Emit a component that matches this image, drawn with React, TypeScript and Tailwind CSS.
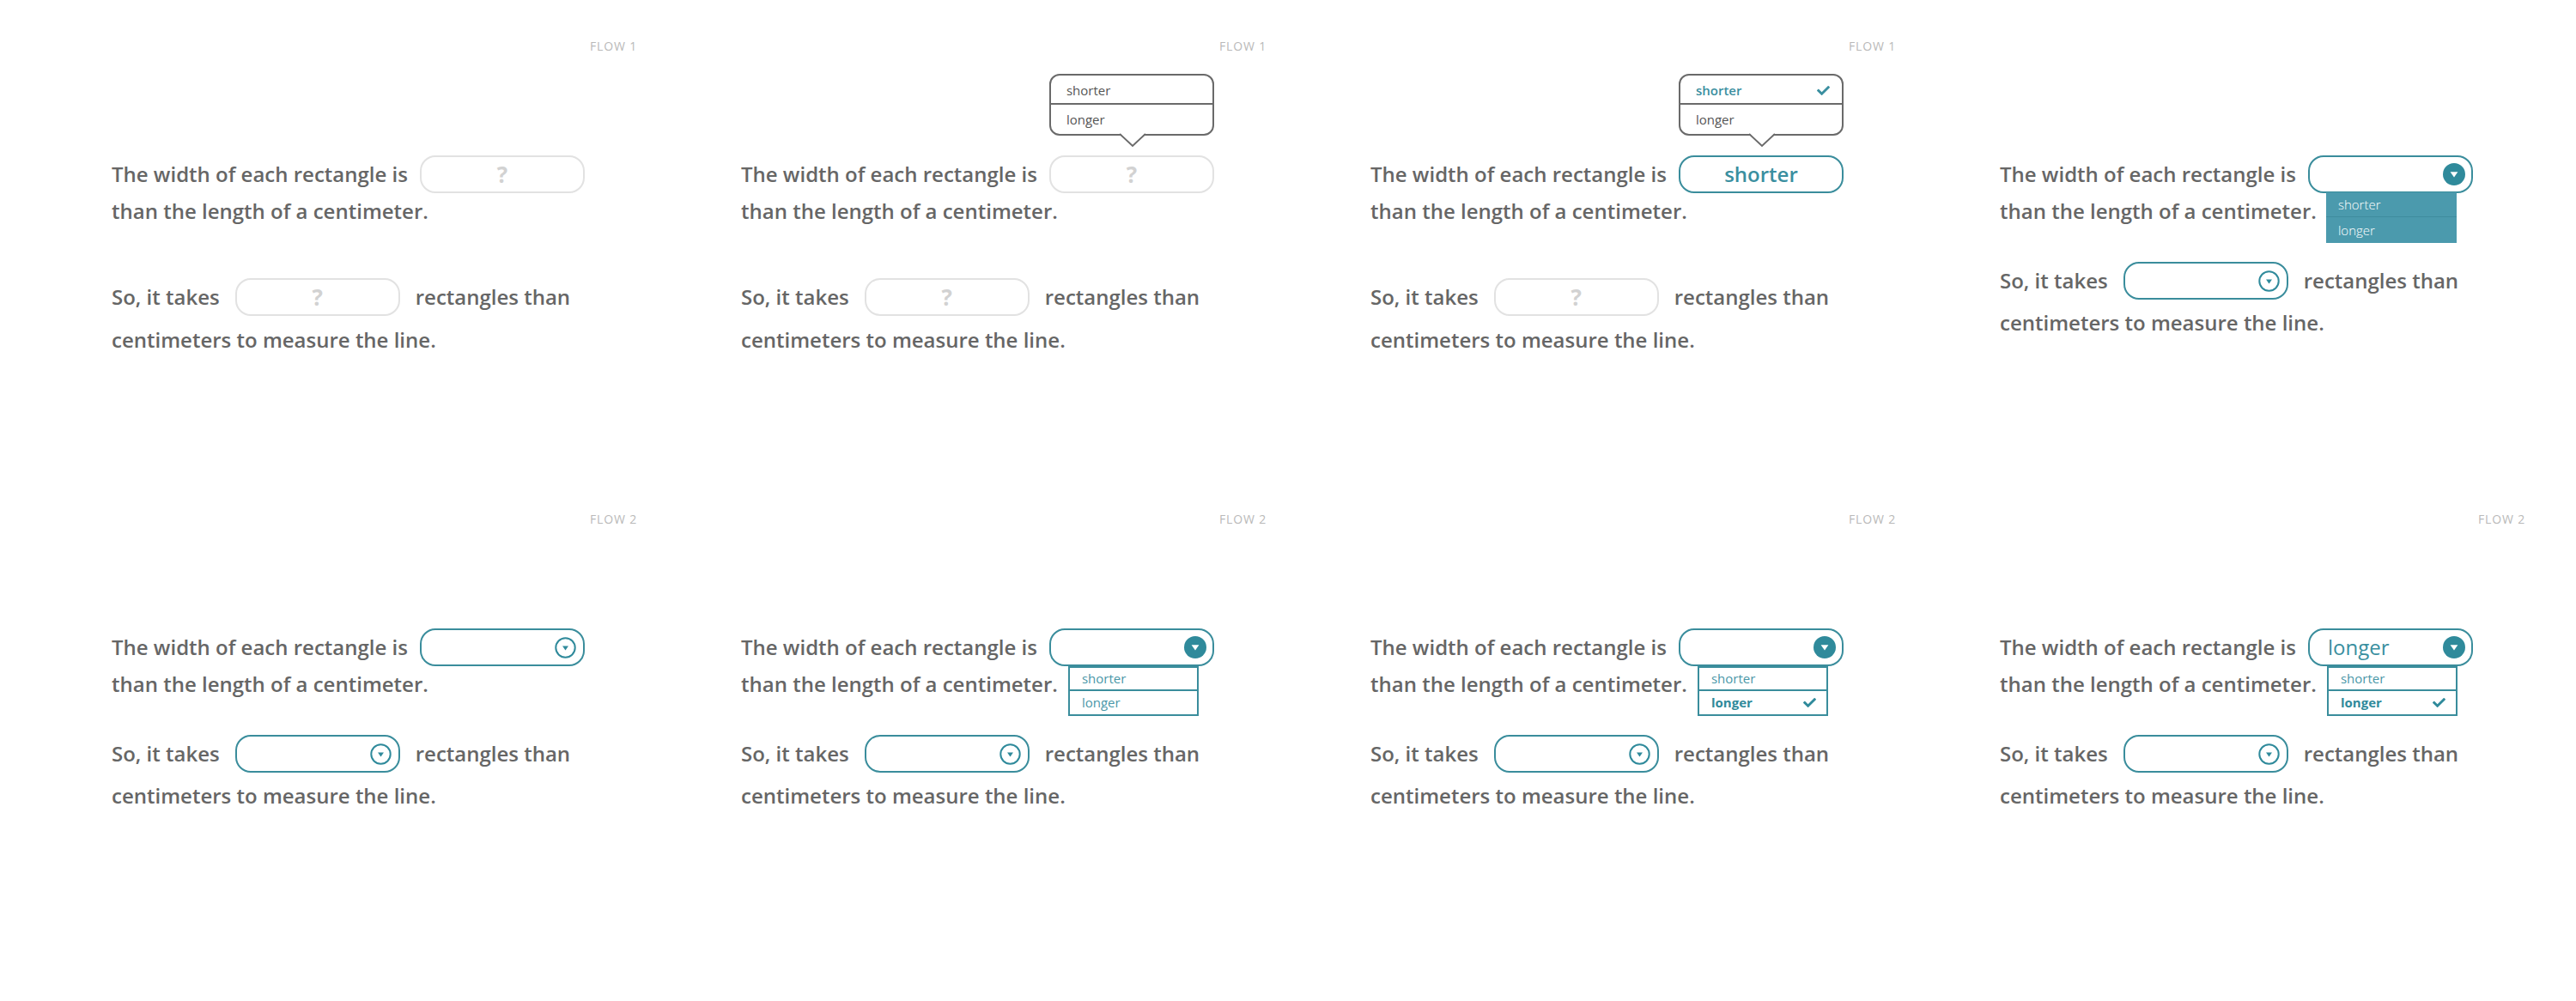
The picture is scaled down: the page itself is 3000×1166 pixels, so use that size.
import React from "react";
import { FaCheck } from "react-icons/fa";

type BoxKind =
  | "blank"
  | "outline"
  | "filled"
  | "shorter"
  | "longerFilled";

function CircleFilled() {
  return (
    <svg width="26" height="26" viewBox="0 0 26 26">
      <circle cx="13" cy="13" r="13" fill="#2f8a9b" />
      <path d="M8.6 10.2 L17.4 10.2 L13 16.6 Z" fill="#ffffff" />
    </svg>
  );
}

function CircleOutline() {
  return (
    <svg width="25" height="25" viewBox="0 0 25 25">
      <circle cx="12.5" cy="12.5" r="11.2" fill="none" stroke="#2f8a9b" strokeWidth="2" />
      <path d="M9 10.4 L16 10.4 L12.5 15.6 Z" fill="#2f8a9b" />
    </svg>
  );
}

function Tooltip({ selected }: { selected: boolean }) {
  return (
    <div className="absolute left-[-2px] top-[-97px] w-[192px] h-[72px] rounded-[12px] border-2 border-[#6a6a6a] bg-white flex flex-col">
      <div className="h-[34px] flex items-center justify-between pl-[18px] pr-[14px] pt-[3px] border-b-2 border-[#6a6a6a]">
        <span
          className={
            selected
              ? "text-[15px] font-semibold text-[#3a8fa0]"
              : "text-[15px] font-medium text-[#555555]"
          }
        >
          shorter
        </span>
        {selected ? <FaCheck className="text-[#3a8fa0] text-[15px]" /> : null}
      </div>
      <div className="flex-1 flex items-center pl-[18px]">
        <span className="text-[15px] font-medium text-[#555555]">longer</span>
      </div>
      <svg
        className="absolute left-[80px] bottom-[-16px]"
        width="30"
        height="17"
        viewBox="0 0 30 17"
      >
        <polygon points="0,0 15,15 30,0" fill="#ffffff" />
        <polyline points="0,1 15,15 30,1" fill="none" stroke="#6a6a6a" strokeWidth="2" />
      </svg>
    </div>
  );
}

function WhiteList({ selected }: { selected: boolean }) {
  return (
    <div className="absolute left-[20px] top-[42px] w-[152px] border-2 border-[#3a8d9c] bg-white flex flex-col">
      <div className="h-[27px] flex items-center pl-[14px] border-b-2 border-[#3a8d9c]">
        <span className="text-[15px] text-[#4a97a8]">shorter</span>
      </div>
      <div className="h-[27px] flex items-center justify-between pl-[14px] pr-[12px]">
        <span
          className={
            selected
              ? "text-[15px] font-bold text-[#2f8a9b]"
              : "text-[15px] text-[#4a97a8]"
          }
        >
          longer
        </span>
        {selected ? <FaCheck className="text-[#2f8a9b] text-[15px]" /> : null}
      </div>
    </div>
  );
}

function FilledList() {
  return (
    <div className="absolute left-[19px] top-[41px] w-[152px] bg-[#4b9aad] flex flex-col">
      <div className="h-[29px] flex items-center pl-[14px] border-b border-[#3f8c9e]">
        <span className="text-[15px] font-light text-white">shorter</span>
      </div>
      <div className="h-[30px] flex items-center pl-[14px]">
        <span className="text-[15px] font-light text-white">longer</span>
      </div>
    </div>
  );
}

function Box({
  kind,
  tooltip,
  list,
}: {
  kind: BoxKind;
  tooltip?: "plain" | "selected";
  list?: "white" | "whiteSel" | "filled";
}) {
  if (kind === "blank") {
    return (
      <div className="relative shrink-0 w-[192px] h-[44px] rounded-[18px] border-2 border-[#e2e2e2] flex items-center justify-center">
        <span className="text-[26px] font-bold text-[#d2d2d2]">?</span>
        {tooltip ? <Tooltip selected={tooltip === "selected"} /> : null}
      </div>
    );
  }
  if (kind === "shorter") {
    return (
      <div className="relative shrink-0 w-[192px] h-[44px] rounded-[18px] border-2 border-[#3a8d9c] flex items-center justify-center">
        <span className="text-[24px] font-semibold text-[#3a8fa0]">shorter</span>
        {tooltip ? <Tooltip selected={tooltip === "selected"} /> : null}
      </div>
    );
  }
  return (
    <div
      className={
        kind === "longerFilled"
          ? "relative shrink-0 w-[192px] h-[44px] rounded-[18px] border-2 border-[#3a8d9c] flex items-center justify-between pl-[21px] pr-[7px]"
          : kind === "filled"
          ? "relative shrink-0 w-[192px] h-[44px] rounded-[18px] border-2 border-[#3a8d9c] flex items-center justify-end pr-[7px]"
          : "relative shrink-0 w-[192px] h-[44px] rounded-[18px] border-2 border-[#3a8d9c] flex items-center justify-end pr-[8px]"
      }
    >
      {kind === "longerFilled" ? (
        <span className="text-[24px] font-medium text-[#3a8fa0]">longer</span>
      ) : null}
      {kind === "outline" ? <CircleOutline /> : <CircleFilled />}
      {list === "filled" ? <FilledList /> : null}
      {list === "white" ? <WhiteList selected={false} /> : null}
      {list === "whiteSel" ? <WhiteList selected={true} /> : null}
    </div>
  );
}

type PanelProps = {
  label?: string;
  compact: boolean;
  first: React.ReactNode;
  second: React.ReactNode;
};

function Panel({ label, compact, first, second }: PanelProps) {
  return (
    <div className="h-[551px] w-[612px] flex flex-col text-[#666666] font-['Open_Sans',sans-serif]">
      <div className="h-[181px] pt-[45px] flex justify-end">
        {label ? (
          <span className="text-[14px] leading-[18px] tracking-[0.06em] text-[#b9b9b9]">
            {label}
          </span>
        ) : null}
      </div>
      <div className="h-[44px] flex items-center">
        <span className="text-[24px] font-semibold whitespace-nowrap">
          The width of each rectangle is
        </span>
        <div className="ml-[14px]">{first}</div>
      </div>
      <div className="h-[42px] flex items-center">
        <span className="text-[24px] font-semibold whitespace-nowrap">
          than the length of a centimeter.
        </span>
      </div>
      <div
        className={
          compact
            ? "mt-[38px] h-[44px] flex items-center"
            : "mt-[57px] h-[44px] flex items-center"
        }
      >
        <span className="text-[24px] font-semibold whitespace-nowrap">So, it takes</span>
        <div className="mx-[18px]">{second}</div>
        <span className="text-[24px] font-semibold whitespace-nowrap">rectangles than</span>
      </div>
      <div
        className={
          compact ? "h-[54px] flex items-center" : "h-[56px] flex items-center"
        }
      >
        <span className="text-[24px] font-semibold whitespace-nowrap">
          centimeters to measure the line.
        </span>
      </div>
    </div>
  );
}

export default function App() {
  return (
    <div className="w-[3000px] h-[1166px] bg-white overflow-hidden">
      <div className="pl-[130px] grid grid-cols-[repeat(4,612px)] gap-x-[121px]">
        <Panel
          label="FLOW 1"
          compact={false}
          first={<Box kind="blank" />}
          second={<Box kind="blank" />}
        />
        <Panel
          label="FLOW 1"
          compact={false}
          first={<Box kind="blank" tooltip="plain" />}
          second={<Box kind="blank" />}
        />
        <Panel
          label="FLOW 1"
          compact={false}
          first={<Box kind="shorter" tooltip="selected" />}
          second={<Box kind="blank" />}
        />
        <Panel
          compact={true}
          first={<Box kind="filled" list="filled" />}
          second={<Box kind="outline" />}
        />
        <Panel
          label="FLOW 2"
          compact={true}
          first={<Box kind="outline" />}
          second={<Box kind="outline" />}
        />
        <Panel
          label="FLOW 2"
          compact={true}
          first={<Box kind="filled" list="white" />}
          second={<Box kind="outline" />}
        />
        <Panel
          label="FLOW 2"
          compact={true}
          first={<Box kind="filled" list="whiteSel" />}
          second={<Box kind="outline" />}
        />
        <Panel
          label="FLOW 2"
          compact={true}
          first={<Box kind="longerFilled" list="whiteSel" />}
          second={<Box kind="outline" />}
        />
      </div>
    </div>
  );
}
